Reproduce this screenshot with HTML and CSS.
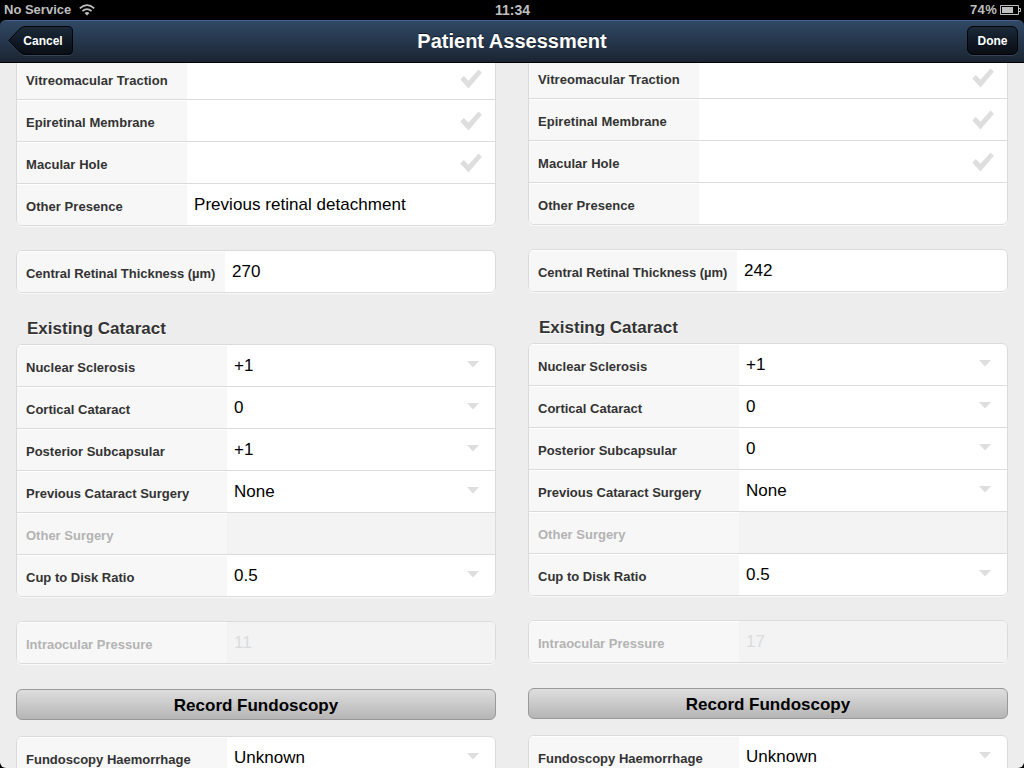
FILE: index.html
```html
<!DOCTYPE html>
<html lang="en">
<head>
<meta charset="utf-8">
<title>Patient Assessment</title>
<link rel="stylesheet" href="styles.css">
</head>
<body>
<svg class="defs" width="0" height="0">
  <symbol id="check" viewBox="0 0 22 20"><path d="M0.3 10.4 3.8 7.1 8.500 11.700 18.500 0.500 21.900 3.700 8.500 19.400Z" fill="#dedede"/></symbol>
  <symbol id="arrow" viewBox="0 0 12 7"><path d="M0 0H12L6 6.6Z" fill="#dedede"/></symbol>
</svg>
<div class="status">
  <div class="carrier"><span class="carrier-name">No Service</span>
    <svg class="wifi" width="16" height="12" viewBox="0 0 16 12" fill="none" stroke="#bfbfbf" stroke-width="1.8"><path d="M.8 4.300Q8-2.100 15.200 4.300M3.400 7.200Q8 3.100 12.600 7.200"/><path d="M8 11.500 5.500 9Q8 7 10.500 9Z" fill="#bfbfbf" stroke="none"/></svg>
  </div>
  <div class="clock">11:34</div>
  <div class="power"><span>74%</span>
    <svg width="21" height="10" viewBox="0 0 21 10"><path d="M.5.5H18.5V9.5H.5ZM18.5 3.5H20.5V6.5H18.5" fill="none" stroke="#bfbfbf"/><path d="M2 2H13V8H2Z" fill="#bfbfbf"/></svg>
  </div>
</div>
<header class="navbar">
  <button class="cancel"><svg class="cancel-shape" width="66" height="31" viewBox="0 0 66 31"><defs><linearGradient id="dark" x2="0" y2="1"><stop offset="0" stop-color="#1c2a3b"/><stop offset=".5" stop-color="#111a26"/><stop offset="1" stop-color="#0a0e14"/></linearGradient></defs><path d="M17 1.500H60Q64.500 1.500 64.500 6V25.500Q64.500 29.500 60 29.500H17Q13.500 29.500 11 26.500L.8 15.500 11 4.500Q13.500 1.500 17 1.500Z" stroke="#34465a" fill="none"/><path d="M17 .5H60Q64.500 .5 64.500 5V24.500Q64.500 28.500 60 28.500H17Q13.500 28.500 11 25.500L.8 14.500 11 3.500Q13.500 .5 17 .5Z" fill="url(#dark)" stroke="#020305"/></svg><span>Cancel</span></button>
  <h1>Patient Assessment</h1>
  <button class="done">Done</button>
</header>
<main>
  <section class="column">
    <div class="group pathology">
      <div class="row"><label>Vitreomacular Traction</label><div class="value"><svg class="check"><use href="#check"/></svg></div></div>
      <div class="row"><label>Epiretinal Membrane</label><div class="value"><svg class="check"><use href="#check"/></svg></div></div>
      <div class="row"><label>Macular Hole</label><div class="value"><svg class="check"><use href="#check"/></svg></div></div>
      <div class="row"><label>Other Presence</label><div class="value"><span class="free-text">Previous retinal detachment</span></div></div>
    </div>
    <div class="group thickness">
      <div class="row"><label>Central Retinal Thickness (µm)</label><div class="value"><span>270</span></div></div>
    </div>
    <h2>Existing Cataract</h2>
    <div class="group cataract">
      <div class="row"><label>Nuclear Sclerosis</label><div class="value"><span>+1</span><svg class="arrow"><use href="#arrow"/></svg></div></div>
      <div class="row"><label>Cortical Cataract</label><div class="value"><span>0</span><svg class="arrow"><use href="#arrow"/></svg></div></div>
      <div class="row"><label>Posterior Subcapsular</label><div class="value"><span>+1</span><svg class="arrow"><use href="#arrow"/></svg></div></div>
      <div class="row"><label>Previous Cataract Surgery</label><div class="value"><span>None</span><svg class="arrow"><use href="#arrow"/></svg></div></div>
      <div class="row disabled"><label>Other Surgery</label><div class="value"></div></div>
      <div class="row"><label>Cup to Disk Ratio</label><div class="value"><span>0.5</span><svg class="arrow"><use href="#arrow"/></svg></div></div>
    </div>
    <div class="group pressure">
      <div class="row disabled"><label>Intraocular Pressure</label><div class="value"><span>11</span></div></div>
    </div>
    <button class="record">Record Fundoscopy</button>
    <div class="group fundoscopy">
      <div class="row"><label>Fundoscopy Haemorrhage</label><div class="value"><span>Unknown</span><svg class="arrow"><use href="#arrow"/></svg></div></div>
    </div>
  </section>
  <section class="column right">
    <div class="group pathology">
      <div class="row"><label>Vitreomacular Traction</label><div class="value"><svg class="check"><use href="#check"/></svg></div></div>
      <div class="row"><label>Epiretinal Membrane</label><div class="value"><svg class="check"><use href="#check"/></svg></div></div>
      <div class="row"><label>Macular Hole</label><div class="value"><svg class="check"><use href="#check"/></svg></div></div>
      <div class="row"><label>Other Presence</label><div class="value"></div></div>
    </div>
    <div class="group thickness">
      <div class="row"><label>Central Retinal Thickness (µm)</label><div class="value"><span>242</span></div></div>
    </div>
    <h2>Existing Cataract</h2>
    <div class="group cataract">
      <div class="row"><label>Nuclear Sclerosis</label><div class="value"><span>+1</span><svg class="arrow"><use href="#arrow"/></svg></div></div>
      <div class="row"><label>Cortical Cataract</label><div class="value"><span>0</span><svg class="arrow"><use href="#arrow"/></svg></div></div>
      <div class="row"><label>Posterior Subcapsular</label><div class="value"><span>0</span><svg class="arrow"><use href="#arrow"/></svg></div></div>
      <div class="row"><label>Previous Cataract Surgery</label><div class="value"><span>None</span><svg class="arrow"><use href="#arrow"/></svg></div></div>
      <div class="row disabled"><label>Other Surgery</label><div class="value"></div></div>
      <div class="row"><label>Cup to Disk Ratio</label><div class="value"><span>0.5</span><svg class="arrow"><use href="#arrow"/></svg></div></div>
    </div>
    <div class="group pressure">
      <div class="row disabled"><label>Intraocular Pressure</label><div class="value"><span>17</span></div></div>
    </div>
    <button class="record">Record Fundoscopy</button>
    <div class="group fundoscopy">
      <div class="row"><label>Fundoscopy Haemorrhage</label><div class="value"><span>Unknown</span><svg class="arrow"><use href="#arrow"/></svg></div></div>
    </div>
  </section>
</main>
</body>
</html>
```
FILE: styles.css
```css
* { box-sizing: border-box; }
body {
  margin: 0;
  width: 1024px;
  height: 768px;
  overflow: hidden;
  display: flex;
  flex-direction: column;
  background: #000;
  font-family: "Liberation Sans", Arial, sans-serif;
}
.defs { position: absolute; }
button { font-family: inherit; font-weight: bold; padding: 0; }

.status {
  height: 20px;
  display: grid;
  grid-template-columns: 1fr auto 1fr;
  align-items: center;
  padding: 0 3px 0 4px;
  color: #bfbfbf;
  font-size: 13px;
  font-weight: bold;
}
.carrier { display: flex; align-items: center; gap: 8px; }
.carrier-name { line-height: 18px; }
.clock { font-size: 14px; line-height: 18px; padding-bottom: 1px; }
.power { display: flex; justify-content: flex-end; align-items: center; gap: 3px; }
.power span { letter-spacing: 0.3px; line-height: 18px; }
.power svg { margin-bottom: 1px; }

.navbar {
  height: 43px;
  display: grid;
  grid-template-columns: 1fr auto 1fr;
  align-items: start;
  padding: 5px 6px 0 6px;
  border-top: 1px solid #43628f;
  border-bottom: 1px solid #000;
  border-radius: 6px 6px 0 0;
  background: linear-gradient(#304865, #1a2531);
  color: #fff;
}
.navbar h1 {
  margin: 0;
  font-size: 20px;
  line-height: 31px;
  text-shadow: 0 -1px 0 #111a26;
}
.cancel {
  position: relative;
  width: 66px;
  height: 31px;
  margin-left: 2px;
  border: 0;
  background: none;
  color: #fff;
  font-size: 12px;
}
.cancel-shape { position: absolute; left: 0; top: 0; }
.cancel span { position: relative; display: block; padding-left: 4px; line-height: 29px; }
.done {
  justify-self: end;
  width: 51px;
  height: 29px;
  border: 1px solid #020305;
  border-radius: 6px;
  background: linear-gradient(#1c2a3b, #111a26 50%, #0a0e14);
  box-shadow: 0 1px 0 #34465a;
  color: #fff;
  font-size: 12px;
  line-height: 28px;
}

main {
  height: 705px;
  overflow: hidden;
  display: flex;
  gap: 32px;
  padding: 0 16px;
  background: #ededed;
  border-radius: 0 0 6px 6px;
}
.column { width: 480px; margin-top: -6px; flex: none; }
.column.right { margin-top: -7px; }
.group {
  border: 1px solid #dbdbdb;
  border-radius: 6px;
  overflow: hidden;
  background: #fff;
  box-shadow: 0 1px 0 #f9f9f9;
}
.row { display: flex; height: 42px; border-bottom: 1px solid #dbdbdb; }
.row:last-child { height: 41px; border-bottom: 0; }
.row label {
  flex: none;
  width: 210px;
  padding: 2px 0 0 9px;
  background: #f7f7f7;
  box-shadow: inset 0 1px 0 #fff;
  color: #333;
  font-size: 13px;
  font-weight: bold;
  line-height: 41px;
  white-space: nowrap;
}
.pathology label { width: 170px; letter-spacing: 0.05px; }
.thickness label { width: 208px; letter-spacing: -0.03px; }
.value {
  flex: 1;
  display: flex;
  justify-content: space-between;
  padding: 0 16px 0 7px;
  font-size: 17px;
  line-height: 41px;
  color: #000;
}
.free-text { letter-spacing: 0.04px; }
.disabled label { color: #b3b3b3; }
.disabled .value { background: #f3f3f3; color: #dbdbdb; }
.check { width: 22px; height: 20px; margin: 11px -3px 0 auto; }
.arrow { width: 12px; height: 7px; margin-top: 16px; }

.thickness { margin-top: 24px; }
.column h2 {
  margin: 26px 0 5px 11px;
  font-size: 17px;
  line-height: 20px;
  color: #333;
  text-shadow: 0 1px 0 #fff;
}
.pressure { margin-top: 24px; }
.record {
  display: block;
  width: 480px;
  height: 31px;
  margin: 25px 0 16px;
  padding-top: 1px;
  border: 1px solid #999;
  border-radius: 6px;
  background: linear-gradient(#dedede, #b5b5b5);
  font-size: 17px;
  line-height: 29px;
  color: #000;
}
```
